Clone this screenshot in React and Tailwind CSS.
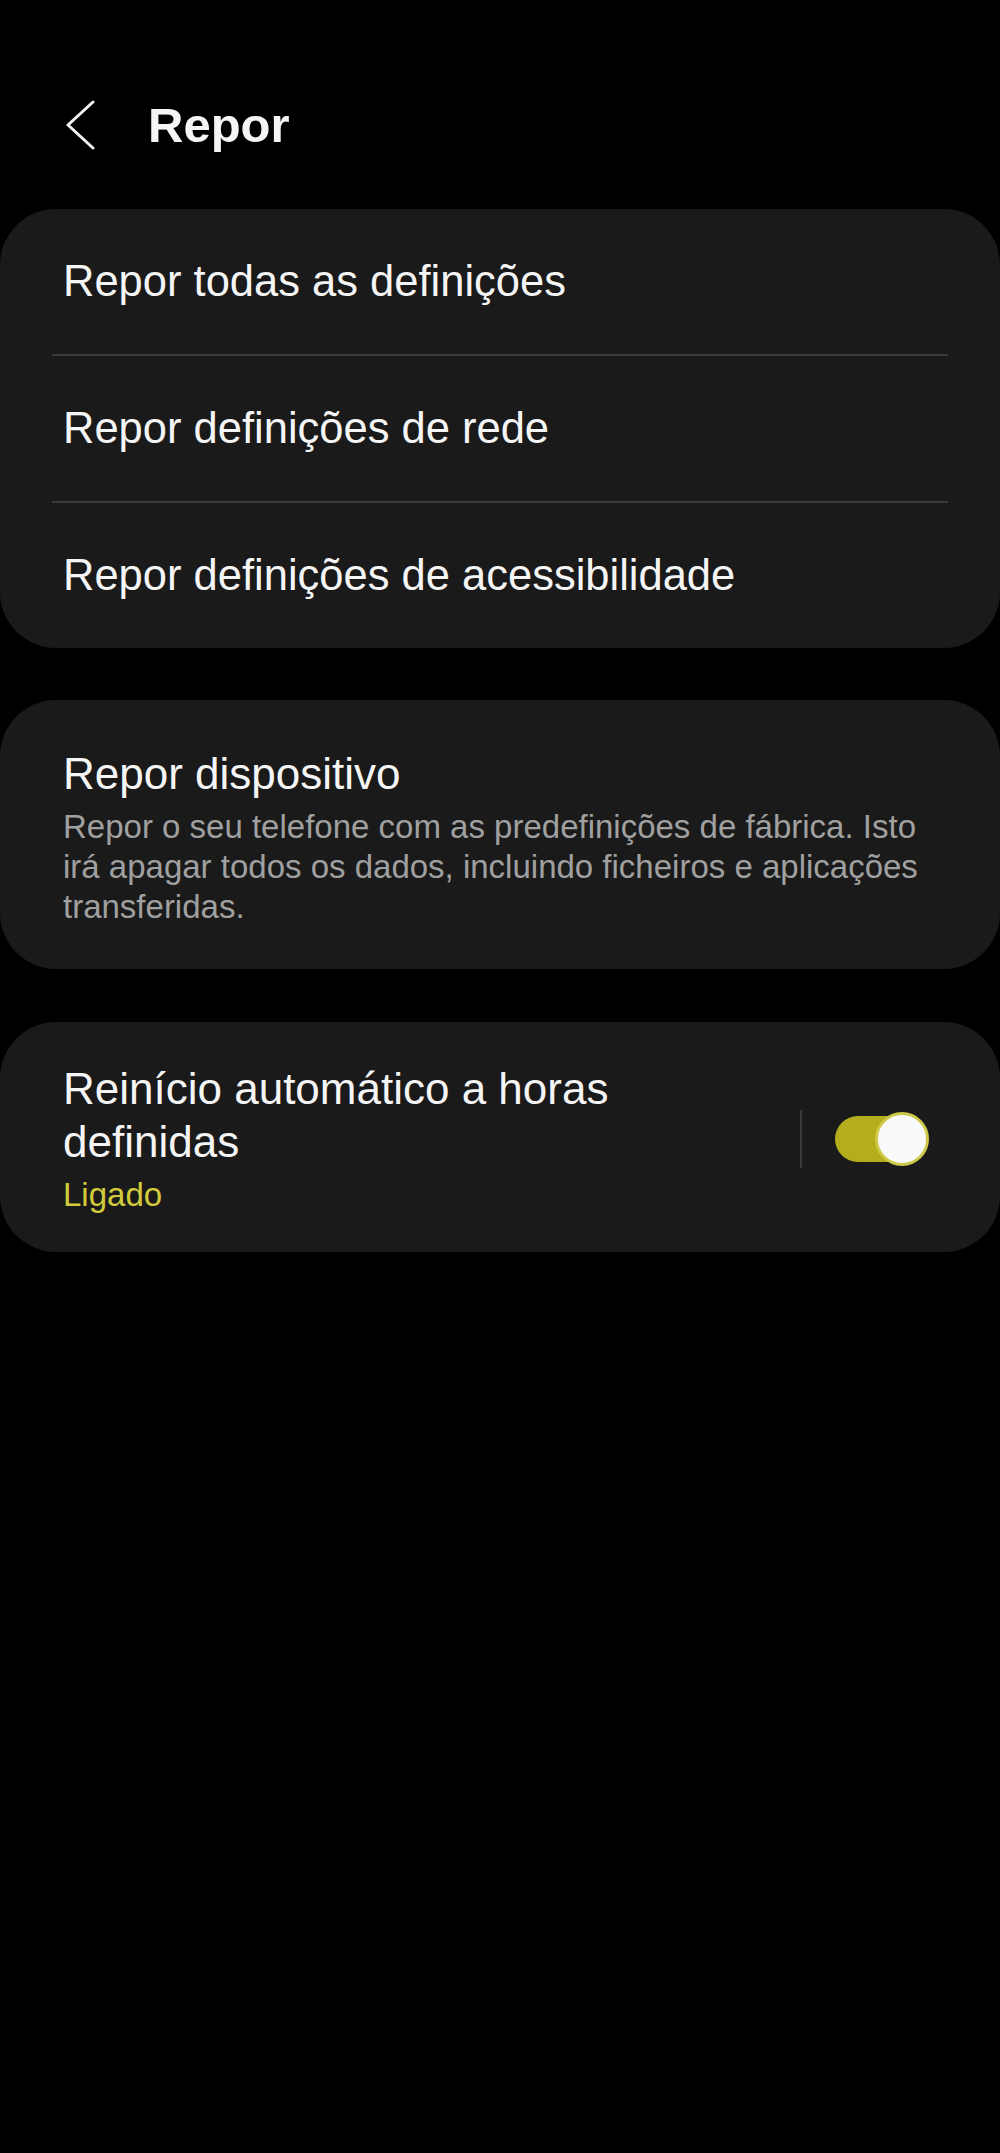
import React from 'react';

const resetRows = [
  'Repor todas as definições',
  'Repor definições de rede',
  'Repor definições de acessibilidade',
];

const Toggle = () => (
  <div className="relative w-[94px] h-[54px] shrink-0">
    <div className="absolute left-0 top-[4px] w-[87px] h-[46px] rounded-full bg-[#b5ae1c]" />
    <div className="absolute right-0 top-0 w-[54px] h-[54px] rounded-full bg-[#fafafa] border-[3px] border-[#cfc94a]" />
  </div>
);

export default function App() {
  return (
    <div className="min-h-[2153px] bg-black text-[#f5f5f5] font-['Liberation_Sans',Arial,sans-serif]">
      {/* Header */}
      <header className="flex h-[208px] items-center pt-[42px] pl-[66px]">
        <svg width="30" height="50" viewBox="0 0 30 50" fill="none" className="shrink-0">
          <polyline points="27,2 2,25 27,48" stroke="#f5f5f5" strokeWidth="3" strokeLinecap="round" strokeLinejoin="round" />
        </svg>
        <h1 className="ml-[52px] text-[49px] font-bold leading-none">Repor</h1>
      </header>

      {/* Reset options */}
      <div className="mt-[1px] rounded-[56px] bg-[#1a1a1a]">
        {resetRows.map((label, idx) => (
          <React.Fragment key={label}>
            {idx > 0 && <div className="mx-[52px] h-[2px] bg-[#3a3a3a]" />}
            <div className="flex h-[145px] items-center px-[63px] text-[43.5px]">{label}</div>
          </React.Fragment>
        ))}
      </div>

      {/* Factory reset */}
      <div className="mt-[52px] rounded-[56px] bg-[#1a1a1a] px-[63px] pt-[48px] pb-[42px]">
        <div className="text-[44px] leading-[52px]">Repor dispositivo</div>
        <p className="mt-[7px] text-[33px] leading-[40px] text-[#a0a0a0]">
          Repor o seu telefone com as predefinições de fábrica. Isto irá apagar todos os dados, incluindo ficheiros e aplicações transferidas.
        </p>
      </div>

      {/* Auto restart */}
      <div className="mt-[53px] flex items-center rounded-[56px] bg-[#1a1a1a] pl-[63px] pr-[71px] pt-[40px] pb-[37px]">
        <div className="flex-1 min-w-0">
          <div className="text-[44px] leading-[53px]">Reinício automático a horas definidas</div>
          <div className="mt-[7px] text-[33px] leading-[40px] text-[#d2cc3c]">Ligado</div>
        </div>
        <div className="ml-[30px] mr-[33px] w-[2px] h-[58px] bg-[#3a3a3a]" />
        <Toggle />
      </div>
    </div>
  );
}
